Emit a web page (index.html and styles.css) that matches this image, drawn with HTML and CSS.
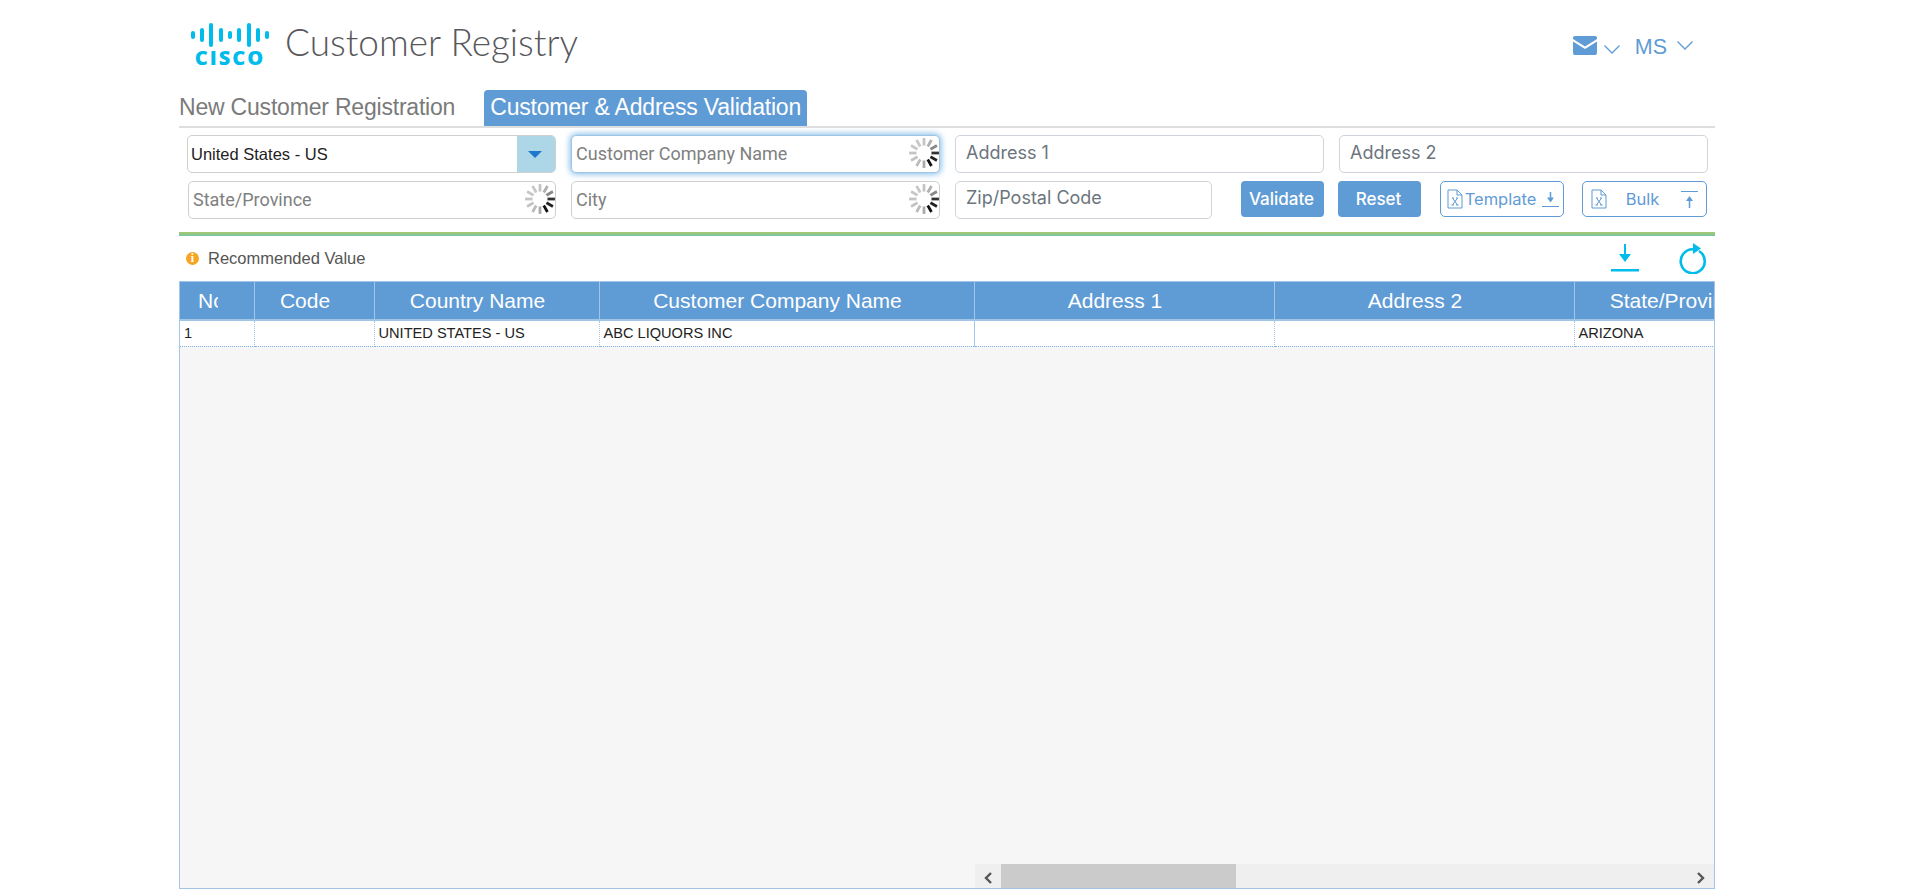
FILE: index.html
```html
<!DOCTYPE html>
<html lang="en">
<head>
    <meta charset="UTF-8">
    <meta name="viewport" content="width=device-width, initial-scale=1.0">
    <title>Customer Registry</title>
    <link rel="stylesheet" href="styles.css">
</head>
<body>
    <svg class="defs" width="0" height="0">
        <symbol id="spinner" viewBox="0 0 30 30">
            <g stroke-width="2.6">
                <line x1="22" y1="15" x2="29" y2="15" stroke="#333" />
                <line x1="22" y1="15" x2="29" y2="15" stroke="#222" transform="rotate(30 15 15)" />
                <line x1="22" y1="15" x2="29" y2="15" stroke="#111" transform="rotate(60 15 15)" />
                <line x1="22" y1="15" x2="29" y2="15" stroke="#aaa" transform="rotate(90 15 15)" />
                <line x1="22" y1="15" x2="29" y2="15" stroke="#bbb" transform="rotate(120 15 15)" />
                <line x1="22" y1="15" x2="29" y2="15" stroke="#c4c4c4" transform="rotate(150 15 15)" />
                <line x1="22" y1="15" x2="29" y2="15" stroke="#c4c4c4" transform="rotate(180 15 15)" />
                <line x1="22" y1="15" x2="29" y2="15" stroke="#c8c8c8" transform="rotate(210 15 15)" />
                <line x1="22" y1="15" x2="29" y2="15" stroke="#c8c8c8" transform="rotate(240 15 15)" />
                <line x1="22" y1="15" x2="29" y2="15" stroke="#c4c4c4" transform="rotate(270 15 15)" />
                <line x1="22" y1="15" x2="29" y2="15" stroke="#b0b0b0" transform="rotate(300 15 15)" />
                <line x1="22" y1="15" x2="29" y2="15" stroke="#888" transform="rotate(330 15 15)" />
            </g>
        </symbol>
        <symbol id="xls" viewBox="0 0 16 20">
            <path d="M1 1h9l5 5v13H1z M10 1v5h5" fill="none" stroke="currentColor" stroke-width="1" />
            <path d="M5 9h2M9 9h2M5.5 9l5 7M10.5 9l-5 7M4.500 16h2.500M9 16h2.500" fill="none" stroke="currentColor" stroke-width="1" />
        </symbol>
    </svg>

    <div class="page">
        <header class="top-bar">
            <div class="brand">
                <div class="logo">
                    <svg class="logo-bars" width="80" height="24" viewBox="0 0 80 24">
                        <g stroke="#00bceb" stroke-width="4" stroke-linecap="round">
                            <line x1="3" y1="10" x2="3" y2="14" />
                            <line x1="12" y1="7" x2="12" y2="17" />
                            <line x1="21" y1="2" x2="21" y2="22" />
                            <line x1="31" y1="7" x2="31" y2="17" />
                            <line x1="40" y1="10" x2="40" y2="14" />
                            <line x1="49" y1="7" x2="49" y2="17" />
                            <line x1="59" y1="2" x2="59" y2="22" />
                            <line x1="68" y1="7" x2="68" y2="17" />
                            <line x1="77" y1="10" x2="77" y2="14" />
                        </g>
                    </svg>
                    <span class="logo-text">CISCO</span>
                </div>
                <h1 class="app-title">Customer Registry</h1>
            </div>
            <div class="user-menu">
                <svg width="24" height="19" viewBox="0 0 24 19">
                    <path d="M2 0h20a2 2 0 0 1 2 2v1L12 10.500 0 3V2a2 2 0 0 1 2-2z" fill="#5f9bd5" />
                    <path d="M0 5.500l12 7.500 12-7.500V17a2 2 0 0 1-2 2H2a2 2 0 0 1-2-2z" fill="#5f9bd5" />
                </svg>
                <svg class="chevron" width="16" height="9" viewBox="0 0 16 9"><path d="M.5.5L8 8 15.500.5" fill="none" stroke="#5f9bd5" stroke-width="1.300" /></svg>
                <span class="user-initials">MS</span>
                <svg class="chevron" width="16" height="9" viewBox="0 0 16 9"><path d="M.5.5L8 8 15.500.5" fill="none" stroke="#5f9bd5" stroke-width="1.300" /></svg>
            </div>
        </header>

        <nav class="tabs">
            <a class="tab">New Customer Registration</a>
            <a class="tab active">Customer &amp; Address Validation</a>
        </nav>

        <form class="search-form">
            <div class="form-row">
                <div class="field field-select">
                    <span class="select-value">United States - US</span>
                    <span class="select-arrow"></span>
                </div>
                <div class="field field-focus">
                    <span class="placeholder">Customer Company Name</span>
                    <svg class="spinner"><use href="#spinner" /></svg>
                </div>
                <div class="field field-plain"><span class="plain-text">Address 1</span></div>
                <div class="field field-plain"><span class="plain-text">Address 2</span></div>
            </div>
            <div class="form-row form-row-two">
                <div class="field field-state">
                    <span class="placeholder">State/Province</span>
                    <svg class="spinner"><use href="#spinner" /></svg>
                </div>
                <div class="field">
                    <span class="placeholder">City</span>
                    <svg class="spinner"><use href="#spinner" /></svg>
                </div>
                <div class="field field-plain field-zip"><span class="plain-text">Zip/Postal Code</span></div>
                <button type="button" class="btn btn-validate">Validate</button>
                <button type="button" class="btn btn-reset">Reset</button>
                <button type="button" class="btn-outline btn-template">
                    <svg class="xls-icon"><use href="#xls" /></svg>
                    <span>Template</span>
                    <svg width="17" height="17" viewBox="0 0 17 17">
                        <path d="M8.500 1v7" stroke="#5f9bd5" stroke-width="1.500" />
                        <path d="M5 6.500h7l-3.500 5z" fill="#5f9bd5" />
                        <path d="M0 15.500h17" stroke="#5f9bd5" />
                    </svg>
                </button>
                <button type="button" class="btn-outline btn-bulk">
                    <svg class="xls-icon"><use href="#xls" /></svg>
                    <span>Bulk</span>
                    <svg width="17" height="17" viewBox="0 0 17 17">
                        <path d="M0 .5h17" stroke="#5f9bd5" />
                        <path d="M5 10h7L8.500 5z" fill="#5f9bd5" />
                        <path d="M8.500 9v8" stroke="#5f9bd5" stroke-width="1.500" />
                    </svg>
                </button>
            </div>
        </form>

        <div class="green-rule"></div>

        <div class="result-bar">
            <div class="legend">
                <span class="legend-dot">i</span>
                <span>Recommended Value</span>
            </div>
            <div class="result-actions">
                <svg width="28" height="28" viewBox="0 0 28 28">
                    <path d="M14 0v11" stroke="#00bceb" stroke-width="2" />
                    <path d="M8 10h12l-6 8z" fill="#00bceb" />
                    <rect x="0" y="25" width="28" height="2.500" fill="#00bceb" />
                </svg>
                <svg class="refresh-icon" width="28" height="31" viewBox="0 0 28 31">
                    <path d="M15 6.300A12 12 0 1 0 20 8" fill="none" stroke="#00bceb" stroke-width="2.600" />
                    <path d="M14 0l8 5.500-8 5.500z" fill="#00bceb" />
                </svg>
            </div>
        </div>

        <div class="grid-box">
            <table class="grid">
                <colgroup>
                    <col class="col-no">
                    <col class="col-code">
                    <col class="col-country">
                    <col class="col-company">
                    <col class="col-address">
                    <col class="col-address">
                    <col class="col-state">
                </colgroup>
                <thead>
                    <tr>
                        <th class="cell-no"><span class="no-clip">No</span></th>
                        <th>Code</th>
                        <th>Country Name</th>
                        <th>Customer Company Name</th>
                        <th>Address 1</th>
                        <th>Address 2</th>
                        <th>State/Province</th>
                    </tr>
                </thead>
                <tbody>
                    <tr>
                        <td>1</td>
                        <td></td>
                        <td>UNITED STATES - US</td>
                        <td>ABC LIQUORS INC</td>
                        <td class="solid-left"></td>
                        <td></td>
                        <td>ARIZONA</td>
                    </tr>
                </tbody>
            </table>
            <div class="h-scroll">
                <svg class="scroll-arrow" width="26" height="12" viewBox="0 0 26 12"><path d="M16 1l-5 5 5 5" fill="none" stroke="#555" stroke-width="2.400" /></svg>
                <div class="scroll-track"><div class="scroll-thumb"></div></div>
                <svg class="scroll-arrow" width="26" height="12" viewBox="0 0 26 12"><path d="M10 1l5 5-5 5" fill="none" stroke="#555" stroke-width="2.400" /></svg>
            </div>
        </div>
    </div>
</body>
</html>
```

FILE: styles.css
```css
* {
    box-sizing: border-box;
}

html, body {
    margin: 0;
    height: 100%;
    overflow: hidden;
    background: #fff;
}

body {
    font-family: "Liberation Sans", Arial, sans-serif;
}

.defs {
    position: absolute;
}

.page {
    width: 1536px;
    margin-left: 179px;
}

/* Header */
.top-bar {
    height: 90px;
    display: flex;
    justify-content: space-between;
    align-items: flex-start;
}

.brand {
    display: flex;
    align-items: flex-start;
    padding: 23px 0 0 11px;
}

.logo {
    width: 80px;
    display: flex;
    flex-direction: column;
    align-items: center;
}

.logo-bars {
    display: block;
}

.logo-text {
    font-family: "Open Sans", sans-serif;
    font-weight: 800;
    font-size: 20px;
    line-height: 22px;
    letter-spacing: 2px;
    color: #00bceb;
}

.app-title {
    margin: -1px 0 0 15px;
    font-family: Lato, sans-serif;
    font-weight: 300;
    font-size: 37px;
    line-height: 40px;
    color: #58585b;
}

.user-menu {
    display: flex;
    align-items: center;
    padding: 32px 22px 0 0;
    color: #5f9bd5;
}

.user-menu .chevron {
    margin: 9px 16px 0 7px;
}

.user-menu .chevron:last-child {
    margin: 0 0 0 10px;
}

.user-initials {
    font-size: 21.5px;
    line-height: 22px;
    margin-top: 4px;
    margin-left: -1px;
}

/* Tabs */
.tabs {
    height: 38px;
    display: flex;
    align-items: flex-start;
    border-bottom: 2px solid #dedede;
}

.tab {
    height: 36px;
    line-height: 35px;
    font-size: 23px;
    color: #7a7a7a;
    letter-spacing: -0.2px;
}

.tab.active {
    margin-left: 29px;
    padding: 0 6px;
    background: #5f9bd5;
    color: #fff;
    border-radius: 4px 4px 0 0;
}

/* Search form */
.search-form {
    padding: 7px 0 0 8px;
    height: 104px;
}

.form-row {
    display: flex;
    gap: 15px;
    height: 38px;
    margin-bottom: 8px;
}

.field {
    position: relative;
    width: 369px;
    height: 38px;
    background: #fff;
    border: 1px solid #cfcfcf;
    border-radius: 5px;
    display: flex;
    align-items: center;
    padding: 0 0 2px 4px;
}

.field-state {
    width: 368px;
    margin-left: 1px;
}

.field-focus {
    border-color: #9fc4e4;
    box-shadow: 0 0 6px 1px #7db8e6;
}

.field-plain {
    border-color: #ced4da;
    align-items: flex-start;
    padding: 5px 0 0 10px;
}

.field-zip {
    width: 257px;
    margin-right: 14px;
    padding-top: 4px;
}

.placeholder {
    font-family: Roboto, sans-serif;
    font-size: 18px;
    color: #808080;
}

.plain-text {
    font-family: Inter, sans-serif;
    font-size: 18px;
    line-height: 24px;
    color: #6c757d;
}

.spinner {
    position: absolute;
    right: -1px;
    top: 1px;
    width: 32px;
    height: 32px;
}

.field-select {
    overflow: hidden;
    padding: 0 0 0 3px;
}

.select-value {
    font-size: 16.5px;
    color: #222;
}

.select-arrow {
    position: absolute;
    top: 0;
    right: 0;
    bottom: 0;
    width: 38px;
    background: #add6e6;
}

.select-arrow::after {
    content: "";
    position: absolute;
    left: 11px;
    top: 15px;
    border-left: 7px solid transparent;
    border-right: 7px solid transparent;
    border-top: 7px solid #1e78cd;
}

.btn {
    height: 36px;
    border: none;
    border-radius: 4px;
    background: #5f9bd5;
    color: #fff;
    font-family: Inter, sans-serif;
    font-size: 17px;
    font-weight: 500;
    padding: 0 2px 0 0;
}

.btn-validate {
    width: 83px;
    margin-right: -1px;
}

.btn-reset {
    width: 83px;
}

.btn-outline {
    height: 36px;
    background: #fff;
    border: 1px solid #5f9bd5;
    border-radius: 5px;
    color: #5f9bd5;
    font-family: Inter, sans-serif;
    font-size: 16.5px;
    display: flex;
    align-items: center;
    padding: 0;
}

.btn-template {
    width: 124px;
    margin-left: 4px;
    padding: 0 4px 0 6px;
    justify-content: space-between;
}

.btn-template span {
    margin-left: -4px;
}

.btn-bulk {
    width: 125px;
    margin-left: 3px;
    padding: 0 8px 0 8px;
    justify-content: space-between;
}

.btn-bulk span {
    margin-left: -3px;
}

.xls-icon {
    width: 16px;
    height: 20px;
    color: #5f9bd5;
}

/* Divider */
.green-rule {
    height: 4px;
    background: linear-gradient(to bottom, #a9c76b, #79c4ab);
}

/* Result toolbar */
.result-bar {
    height: 45px;
    display: flex;
    justify-content: space-between;
    align-items: center;
    padding: 0 8px 0 7px;
}

.legend {
    display: flex;
    align-items: center;
    gap: 9px;
    font-size: 16.5px;
    color: #555;
}

.legend-dot {
    width: 13px;
    height: 13px;
    border-radius: 50%;
    background: #f5a623;
    color: #fff;
    font-family: "Liberation Serif", serif;
    font-weight: 700;
    font-size: 12px;
    line-height: 13px;
    text-align: center;
}

.result-actions {
    display: flex;
    gap: 40px;
    align-items: flex-start;
    padding-top: 1px;
}

.refresh-icon {
    margin-top: -1px;
}

/* Grid */
.grid-box {
    position: relative;
    width: 1536px;
    height: 608px;
    background: #f6f6f6;
    border: 1px solid #a3c6e8;
    overflow: hidden;
}

.grid {
    table-layout: fixed;
    border-collapse: collapse;
    width: 1620px;
}

.col-no { width: 74px; }
.col-code { width: 120px; }
.col-country { width: 225px; }
.col-company { width: 375px; }
.col-address { width: 300px; }
.col-state { width: 226px; }

.grid th {
    height: 38px;
    background: #5f9bd5;
    color: #fff;
    font-weight: 400;
    font-size: 21px;
    text-align: center;
    white-space: nowrap;
    overflow: hidden;
    border-right: 1px solid #a3c6e8;
    border-bottom: 2px solid #a3c6e8;
    padding: 0 18px 0 0;
}

.grid th.cell-no {
    text-align: left;
    padding-left: 18px;
}

.no-clip {
    display: block;
    width: 20px;
    overflow: hidden;
}

.grid td {
    height: 26px;
    background: #fff;
    font-size: 14.6px;
    color: #222;
    padding: 0 0 0 4px;
    white-space: nowrap;
    border-right: 1px dotted #a3c6e8;
    border-bottom: 1px dotted #7fb0e0;
}

.grid td.solid-left {
    border-left: 1px solid #a3c6e8;
}

.h-scroll {
    position: absolute;
    left: 795px;
    right: 0;
    bottom: 0;
    height: 24px;
    display: flex;
    align-items: center;
    background: #efefef;
}

.scroll-arrow {
    flex: none;
    margin-top: 3px;
}

.scroll-track {
    flex: 1;
    height: 100%;
}

.scroll-thumb {
    width: 235px;
    height: 100%;
    background: #cbcbcb;
}
```
